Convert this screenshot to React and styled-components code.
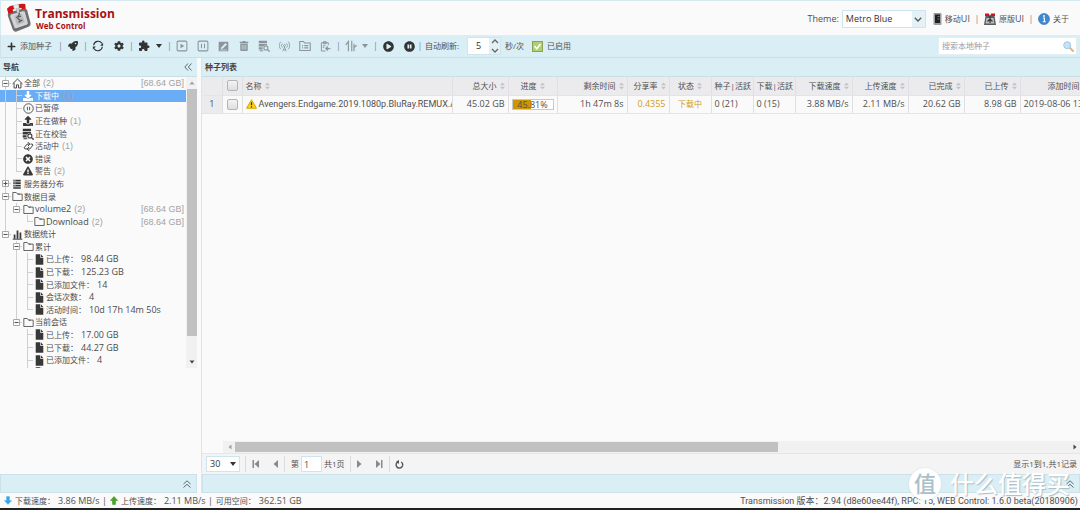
import React from 'react';
import styled, { createGlobalStyle, css } from 'styled-components';
import {
  FaPlus, FaRocket, FaCog, FaTrashAlt, FaDownload, FaUpload,
  FaTimesCircle, FaExclamationTriangle, FaPlayCircle, FaPauseCircle,
} from 'react-icons/fa';
import { MdExtension } from 'react-icons/md';

const GlobalStyle = createGlobalStyle`
  * { box-sizing: border-box; }
  body {
    margin: 0;
    background: #fafafa;
    color: #505050;
    font-family: "Open Sans", "Noto Sans CJK SC", sans-serif;
    font-size: 8px;
    line-height: 12px;
  }
  button, input, select { font: inherit; color: inherit; margin: 0; padding: 0; border: 0; background: none; border-radius: 0; outline: 0; }
  button { cursor: pointer; }
  a { color: inherit; text-decoration: none; }
`;

/* ---------- icons ---------- */

const Svg = ({ size = 11, w, children, ...rest }) => (
  <svg width={w || size} height={size} viewBox="0 0 16 16" fill="none" stroke="currentColor" strokeWidth="1.4" aria-hidden="true" {...rest}>
    {children}
  </svg>
);
const BoxPlay = () => <Svg size={12}><rect x="1.5" y="1.5" width="13" height="13" rx="1.5" /><path d="M6 5l5 3-5 3z" fill="currentColor" stroke="none" /></Svg>;
const BoxPause = () => <Svg size={12}><rect x="1.5" y="1.5" width="13" height="13" rx="1.5" /><path d="M6 5v6M10 5v6" /></Svg>;
const BoxEdit = () => <Svg><rect x="1" y="1" width="14" height="14" rx="1" fill="currentColor" stroke="none" /><path d="M4 12l1-3 6-6 2 2-6 6z" fill="#daeef5" stroke="none" /><path d="M3 13h10" stroke="#daeef5" strokeWidth="1" /></Svg>;
const DbSearch = () => (
  <Svg size={12}>
    <path d="M1 1h11v3H1zM1 5h11v2.3a4 4 0 0 0-5 1.2H1zM1 9.500h5.200a4 4 0 0 0 .3 3H1zM2 13.500h5v1.500H2z" fill="currentColor" stroke="none" />
    <circle cx="10.500" cy="10.500" r="2.700" /><path d="M12.500 12.500l3 3" strokeWidth="1.800" />
  </Svg>
);
const Tower = () => (
  <Svg strokeWidth="1.200">
    <circle cx="8" cy="6.500" r="1.400" /><path d="M8 8v2M8 9l-2.500 6M8 9l2.500 6M6.500 13h3M5 9.500a4 4 0 0 1 0-6M11 9.500a4 4 0 0 0 0-6M2.600 12a8 8 0 0 1 0-11M13.400 12a8 8 0 0 0 0-11" />
  </Svg>
);
const FolderList = () => <Svg size={12}><path d="M1 14V2h5l1.500 2H15v10z" /><path d="M4 7.500h1.500M4 10.500h1.500M7 7.500h5.500M7 10.500h5.500" /></Svg>;
const ClipArrow = () => <Svg><path d="M12 6V2.500H2v12h6M5 1h4v3H5z" /><path d="M4 7h4M4 9.500h2" /><path d="M15 11H9m2.500-3L8.500 11l3 3" strokeWidth="1.800" /></Svg>;
const SortArrows = () => <Svg size={12}><path d="M4.500 15V2L1 6.500M9 1v14M12 15V5M12 10l3.500-3" strokeWidth="1.500" /></Svg>;
const Reload = () => (
  <Svg size={12} strokeWidth="1.500">
    <path d="M2.200 7a6 6 0 0 1 11-2.500M13.800 9a6 6 0 0 1-11 2.500" />
    <path d="M14.800 3.500v4h-4zM1.200 12.500v-4h4z" fill="currentColor" stroke="none" />
  </Svg>
);
const Home = () => <Svg size={11} strokeWidth="1.300"><path d="M.8 8.500L8 1.500l7.200 7M3 7v7.500h3.500V10h3v4.500H13V7" /></Svg>;
const PauseRound = () => <Svg size={11} strokeWidth="1.200"><circle cx="8" cy="8" r="6.900" /><path d="M6.400 5.500v5M9.600 5.500v5" /></Svg>;
const Swap = () => <Svg size={11}><path d="M6 11.500H3L1.500 10 6 4.500h3M7 1.500l3 3-3 3M11 4.500h2.500L14.500 6 10 11.500H7M9 8.500l-3 3 3 3" /></Svg>;
const Servers = () => <Svg size={10}><path d="M2 1h12v3H2zM2 5h12v3H2zM2 9h12v3H2zM2 13h12v2.500H2z" fill="currentColor" stroke="none" /><path d="M3 2.500h3M3 6.500h3M3 10.500h3" stroke="#fafafa" strokeWidth=".8" /></Svg>;
const Folder = () => <Svg size={11} strokeWidth="1.100"><path d="M1.200 13.800V2.200h5l2 2.300h6.600v9.300z" /><path d="M8.200 4.500h3" /></Svg>;
const Bars = () => <Svg size={11}><path d="M1 14.800h14" /><path d="M2.500 8h2.500v6H2.500zM6.700 2h2.600v12H6.700zM11 5h2.500v9H11z" fill="currentColor" stroke="none" /></Svg>;
const FileIcon = () => <Svg size={11}><path d="M2.500.5H9V5.500h4.500v10h-11zM10 .5l3.500 4H10z" fill="currentColor" stroke="none" /></Svg>;
const Caret = () => <svg width="6" height="4" viewBox="0 0 6 4" aria-hidden="true"><path d="M0 0h6L3 4z" fill="currentColor" /></svg>;
const DoubleChevron = ({ turn = 0 }) => (
  <svg width="8" height="8" viewBox="0 0 8 8" aria-hidden="true"><path transform={`rotate(${turn} 4 4)`} d="M4 .5L.8 4 4 7.500M7.500 .5L4.300 4l3.200 3.500" fill="none" stroke="#5b6a70" strokeWidth="1" /></svg>
);
const SortMark = () => <svg width="5" height="8" viewBox="0 0 5 8" aria-hidden="true"><path d="M0 3.300L2.500.4 5 3.300zM0 4.700l2.500 2.900L5 4.700z" fill="#c3c3c6" /></svg>;
const WarnSvg = styled.svg`
  flex: none;
`;
const Warn = () => (
  <WarnSvg width="11" height="10" viewBox="0 0 22 20" aria-hidden="true">
    <path d="M11 1.500L21 18.500H1z" fill="#f6d21c" stroke="#d9a800" strokeWidth="2" strokeLinejoin="round" />
    <path d="M11 6.500v6M11 14.500v2.500" stroke="#3a3000" strokeWidth="2.400" />
  </WarnSvg>
);
const Logo = () => (
  <svg width="25" height="30" viewBox="0 0 26 30" aria-hidden="true">
    <path d="M2 13q-1-3 2-4l14-4q3-.5 4 2l3.500 13q.5 3-2 4L11 29q-3 .8-4-2z" fill="#6f7071" />
    <path d="M4 13.500q-.5-2 1.500-2.700L17.500 7.500q2-.4 2.600 1.200l3 11q.4 2-1.400 2.700L11 26q-2 .6-2.700-1.200z" fill="#d2d3d4" stroke="#4f5051" strokeWidth=".6" />
    <path d="M8.500 13l8-2.500 3 9-8 2.800z" fill="#b8babb" />
    <path d="M11.500 8.500q4 1 1.500 4t2 5M10.500 14.500l5-1.500M13 19.500l4-2.500" stroke="#555657" strokeWidth="1.300" fill="none" />
    <path d="M10.500 4.500l2.500-.5 1 5.500-2.500.6z" fill="#d9d9d9" stroke="#777" strokeWidth=".4" />
    <path d="M1 5.500q3-4 7-3.500l1 3.500-2 1 .5 2.500-5 1.500zM12.500 1q4-1.500 7.500-.5l.5 5-4 .5-.5-1.500-2.500.3z" fill="#d31217" />
    <path d="M7.500 2l5.500-1 .7 3.500-5 1.200z" fill="#eee" stroke="#999" strokeWidth=".4" />
  </svg>
);
const Phone = () => (
  <svg width="9" height="12" viewBox="0 0 8 12" aria-hidden="true"><rect width="8" height="12" rx="1" fill="#9a9c9d" /><rect x="1.500" y="1.500" width="5" height="8.500" fill="#1e2122" /><path d="M4 3.500h2M4 6h2" stroke="#889" strokeWidth=".8" /></svg>
);
const MiniLogo = () => (
  <svg width="12" height="12" viewBox="0 0 12 12" aria-hidden="true">
    <path d="M1.500 3h9L12 12H0z" fill="#5c5d5e" /><path d="M2.500 5h7l.8 5.500H1.700z" fill="#bfc0c1" /><path d="M6 2v8M3.500 8.500L6 6l2.500 2.500" stroke="#333" strokeWidth="1.200" fill="none" /><path d="M1 .5h4l.5 2.500H1zM7 .5h4V3H6.500z" fill="#d31217" />
  </svg>
);
const Info = () => (
  <svg width="12" height="12" viewBox="0 0 12 12" aria-hidden="true"><circle cx="6" cy="6" r="5.500" fill="#3d8ad2" stroke="#2a6cb0" strokeWidth=".6" /><path d="M5 5h1.400v3.500M4.800 8.800h3" stroke="#fff" strokeWidth="1.100" fill="none" /><circle cx="6" cy="3" r=".9" fill="#fff" /></svg>
);
const Lens = () => (
  <svg width="11" height="11" viewBox="0 0 11 11" aria-hidden="true"><path d="M6.500 6.500l3.500 3.500" stroke="#e9b27c" strokeWidth="2" strokeLinecap="round" /><circle cx="4.200" cy="4.200" r="3.500" fill="#c4e2f7" stroke="#a3c6e2" strokeWidth="1" /></svg>
);
const CheckBadge = () => (
  <svg width="11" height="11" viewBox="0 0 11 11" aria-hidden="true"><rect x=".5" y=".5" width="10" height="10" fill="#b0cf72" stroke="#8aa551" /><path d="M2.500 5l2.300 2.700L8.500 3" stroke="#fff" strokeWidth="1.600" fill="none" /></svg>
);
const FatArrow = ({ up }) => (
  <svg width="8" height="9" viewBox="0 0 8 9" aria-hidden="true">
    {up ? <path d="M4 .5l3.700 4H5.500v4h-3v-4H.3z" fill="#45a81d" stroke="#2f7d12" strokeWidth=".4" /> : <path d="M4 8.500l3.700-4H5.500v-4h-3v4H.3z" fill="#35a3e6" stroke="#5ab4ea" strokeWidth=".4" />}
  </svg>
);
const PageArrow = ({ left, bar }) => (
  <svg width="8" height="8" viewBox="0 0 8 8" aria-hidden="true"><g transform={left ? 'translate(8 0) scale(-1 1)' : undefined} fill="#8a8a8a"><path d="M1 0l4.500 4L1 8z" />{bar && <path d="M6 0h1.500v8H6z" />}</g></svg>
);
const ScrollTip = ({ turn, dark }) => (
  <svg width="6" height="6" viewBox="0 0 6 6" aria-hidden="true"><path transform={`rotate(${turn} 3 3)`} d="M.5 4.500h5L3 1.500z" fill={dark ? '#444' : '#a0a0a0'} /></svg>
);

/* ---------- page frame ---------- */

const Latin = styled.span`
  font-size: 9px;
`;
const LongText = styled.span`
  font-family: Roboto, "Noto Sans CJK SC", sans-serif;
  font-size: 9px;
  white-space: nowrap;
`;
const Page = styled.div`
  position: relative;
  display: flex;
  flex-direction: column;
  min-height: 100vh;
  border-top: 1px solid #d5e9f0;
  border-bottom: 2px solid #222;
  overflow: hidden;
`;
const Header = styled.header`
  display: flex;
  align-items: center;
  justify-content: space-between;
  height: 34px;
  padding: 0 11px 0 5px;
  border-left: 1px solid #d5e9f0;
`;
const Brand = styled.div`
  display: flex;
  align-items: center;
  gap: 4px;
  color: #a81014;
  font-weight: 700;
`;
const BrandText = styled.div`
  display: flex;
  flex-direction: column;
  padding-top: 2px;
`;
const BrandName = styled.h1`
  margin: 0;
  font-size: 12px;
  line-height: 13px;
`;
const BrandSub = styled.span`
  padding-left: 1px;
  line-height: 11px;
`;
const HeaderTools = styled.div`
  display: flex;
  align-items: center;
  gap: 3px;
  padding-top: 2px;
`;
const IconLink = styled.a`
  display: flex;
  align-items: center;
  gap: 3px;
`;
const LinkText = styled.span`
  display: flex;
`;
const Sep = styled.span`
  flex: none;
  width: ${(p) => p.$w || 13}px;
  text-align: center;
  font-size: 9px;
  color: #808a8e;
`;
const ThemePick = styled.label`
  display: flex;
  align-items: center;
  gap: 3px;
  margin-right: 4px;
  font-size: 9px;
`;
const SelectBox = styled.span`
  display: grid;
  grid-template-columns: 1fr 13px;
  width: ${(p) => p.$w}px;
  height: ${(p) => p.$h}px;
  border: 1px solid #cfe5ed;
  background: #fff;
  align-items: center;
  color: #333;
`;
const BareSelect = styled.select`
  grid-area: 1 / 1 / 2 / 3;
  appearance: none;
  width: 100%;
  height: 100%;
  padding-left: 3px;
  font-size: 9px;
`;
const SelectMark = styled.span`
  grid-area: 1 / 2;
  display: flex;
  align-items: center;
  justify-content: center;
  height: 100%;
  pointer-events: none;
  background: ${(p) => (p.$tint ? '#e4f2f7' : 'transparent')};
`;

const Toolbar = styled.div`
  display: flex;
  align-items: center;
  height: 23px;
  padding: 0 3px 0 6px;
  background: #daeef5;
  border-bottom: 1px solid #c9dfe6;
  border-left: 1px solid #cfe3ea;
`;
const ToolButton = styled.button`
  display: flex;
  align-items: center;
  justify-content: center;
  flex: none;
  gap: 4px;
  min-width: ${(p) => p.$w || 12}px;
  color: ${(p) => (p.disabled ? '#8b9599' : '#333')};
`;
const ToolLabel = styled.span`
  padding-right: 2px;
  color: #505050;
`;
const ToolGroup = styled.div`
  display: flex;
  flex: none;
  justify-content: space-between;
  width: ${(p) => p.$w}px;
`;
const RefreshField = styled.label`
  display: flex;
  align-items: center;
  gap: 4px;
`;
const Spinner = styled.span`
  display: flex;
  height: 18px;
  width: 34px;
  margin-left: 4px;
  border: 1px solid #cfe5ed;
  background: #fff;
`;
const SpinInput = styled.input`
  width: 21px;
  text-align: center;
  font-size: 9px;
  color: #333;
`;
const SpinArrows = styled.span`
  display: flex;
  flex: 1;
  align-items: center;
  justify-content: center;
  background: #e1f1f6;
`;
const SearchBox = styled.div`
  display: flex;
  align-items: center;
  width: 139px;
  height: 18px;
  margin-left: auto;
  padding: 0 2px 0 3px;
  background: #fff;
  border: 1px solid #e2eff4;
`;
const SearchInput = styled.input`
  flex: 1;
  min-width: 0;
  &::placeholder { color: #a0a0a0; opacity: 1; }
`;

const Body = styled.div`
  display: flex;
  flex: 1;
  gap: 4px;
`;
const panel = css`
  display: flex;
  flex-direction: column;
  border: 0 solid #d3e7ee;
`;
const Sidebar = styled.nav`
  ${panel}
  flex: none;
  width: 197px;
`;
const Main = styled.main`
  ${panel}
  flex: 1;
  min-width: 0;
  border-left-width: 1px;
`;
const PanelTitle = styled.div`
  display: flex;
  align-items: center;
  justify-content: space-between;
  height: 19px;
  padding: 0 5px 0 3px;
  background: #daeef5;
  border-bottom: 1px solid #c9dfe6;
  color: #444;
  h2 { margin: 0; font-size: 8px; font-weight: 700; }
`;
const PanelFoot = styled.div`
  display: flex;
  align-items: center;
  justify-content: flex-end;
  height: 19px;
  margin-top: ${(p) => (p.$push ? 'auto' : 0)};
  padding-right: 5px;
  background: #daeef5;
  border: 1px solid #cbe2ea;
`;

/* ---------- tree ---------- */

const TreeView = styled.div`
  display: flex;
  height: 291px;
`;
const TreeClip = styled.div`
  flex: 1;
  overflow: hidden;
`;
const TreeList = styled.ul`
  display: grid;
  grid-auto-rows: 1fr;
  height: 302px;
  margin: 0;
  padding: 0;
  list-style: none;
`;
const TreeRow = styled.li`
  display: flex;
  align-items: center;
  min-height: 0;
  padding-right: 2px;
  white-space: nowrap;
  background: ${(p) => (p.$on ? '#6aacf6' : 'transparent')};
  color: ${(p) => (p.$on ? '#fff' : '#4c4c4c')};
`;
const line = '#cfcfcf';
const Indent = styled.span`
  align-self: stretch;
  flex: none;
  display: flex;
  align-items: center;
  width: 11px;
  background-image: ${(p) => (/[vtlme]/.test(p.$k) ? `linear-gradient(${line}, ${line})` : 'none')}${(p) => (/[tlme]/.test(p.$k) ? `, linear-gradient(${line}, ${line})` : '')};
  background-size: 1px ${(p) => (/[le]/.test(p.$k) ? '50%' : '100%')}, 6px 1px;
  background-position: 5px 0, 5px 50%;
  background-repeat: no-repeat;
`;
const Toggle = styled.button`
  display: flex;
  margin-left: 2px;
`;
const TreeIcon = styled.span`
  display: flex;
  flex: none;
  justify-content: center;
  width: 12px;
  color: ${(p) => (p.$on ? '#fff' : '#383838')};
`;
const TreeLabel = styled.span`
  padding-left: 1px;
  font-size: ${(p) => (p.$latin ? 9 : 8)}px;
`;
const Count = styled.span`
  margin-left: 3px;
  color: #a3a3a3;
  font-family: "Liberation Sans", sans-serif;
  font-size: 9px;
`;
const Size = styled(Count)`
  margin-left: auto;
`;
const Value = styled(Latin)`
  margin-left: 3px;
`;
const ScrollV = styled.div`
  display: flex;
  flex-direction: column;
  align-items: center;
  justify-content: space-between;
  width: 11px;
  padding: 3px 0;
  background: #f1f1f1;
`;
const ThumbV = styled.div`
  flex: 1;
  width: 10px;
  margin: 3px 0 23px;
  background: #c1c1c1;
`;

/* one letter per indent cell: v line, t branch, l last branch, m open, e open and last, p closed */
const tree = [
  { cells: 'm', Icon: Home, label: '全部', count: '(2)', size: '[68.64 GB]' },
  { cells: 'vt', Icon: FaDownload, label: '下载中', count: '(1)', on: true },
  { cells: 'vt', Icon: PauseRound, label: '已暂停' },
  { cells: 'vt', Icon: FaUpload, label: '正在做种', count: '(1)' },
  { cells: 'vt', Icon: DbSearch, label: '正在校验' },
  { cells: 'vt', Icon: Swap, label: '活动中', count: '(1)' },
  { cells: 'vt', Icon: FaTimesCircle, label: '错误' },
  { cells: 'vl', Icon: FaExclamationTriangle, label: '警告', count: '(2)' },
  { cells: 'p', Icon: Servers, label: '服务器分布' },
  { cells: 'm', Icon: Folder, label: '数据目录' },
  { cells: 've', Icon: Folder, label: 'volume2', latin: true, count: '(2)', size: '[68.64 GB]' },
  { cells: 'v l', Icon: Folder, label: 'Download', latin: true, count: '(2)', size: '[68.64 GB]' },
  { cells: 'e', Icon: Bars, label: '数据统计' },
  { cells: ' m', Icon: Folder, label: '累计' },
  { cells: ' vt', Icon: FileIcon, label: '已上传：', value: '98.44 GB' },
  { cells: ' vt', Icon: FileIcon, label: '已下载：', value: '125.23 GB' },
  { cells: ' vt', Icon: FileIcon, label: '已添加文件：', value: '14' },
  { cells: ' vt', Icon: FileIcon, label: '会话次数：', value: '4' },
  { cells: ' vl', Icon: FileIcon, label: '活动时间：', value: '10d 17h 14m 50s' },
  { cells: ' e', Icon: Folder, label: '当前会话' },
  { cells: '  t', Icon: FileIcon, label: '已上传：', value: '17.00 GB' },
  { cells: '  t', Icon: FileIcon, label: '已下载：', value: '44.27 GB' },
  { cells: '  t', Icon: FileIcon, label: '已添加文件：', value: '4' },
  { cells: '  t', Icon: FileIcon, label: '' },
];

const TreeItem = ({ row }) => {
  const { cells, Icon, label, count, size, on, value, latin } = row;
  return (
    <TreeRow $on={on}>
      {cells.split('').map((k, i) => (
        <Indent key={i} $k={k === 'p' ? 'm' : k}>
          {/[mep]/.test(k) && (
            <Toggle aria-label={label}>
              <svg width="7" height="7" viewBox="0 0 7 7"><path d="M.5.5h6v6h-6z" fill="#fafafa" stroke="#a8a8a8" /><path d={k === 'p' ? 'M1.500 3.500h4M3.500 1.500v4' : 'M1.500 3.500h4'} stroke="#555" /></svg>
            </Toggle>
          )}
        </Indent>
      ))}
      <TreeIcon $on={on}><Icon size={10} /></TreeIcon>
      <TreeLabel $latin={latin}>{label}</TreeLabel>
      {value && <Value>{value}</Value>}
      {count && <Count>{count}</Count>}
      {size && <Size>{size}</Size>}
    </TreeRow>
  );
};

/* ---------- torrent table ---------- */

const TableWrap = styled.div`
  flex: 1;
  overflow: hidden;
`;
const Table = styled.table`
  table-layout: fixed;
  width: 889px;
  border-collapse: collapse;
`;
const cell = css`
  height: 18px;
  padding: 0 3px;
  border-right: 1px solid #e0e0e2;
  border-bottom: 1px solid #e4e4e6;
  text-align: ${(p) => p.$a || 'left'};
  white-space: nowrap;
  overflow: hidden;
  font-weight: 400;
`;
const Th = styled.th`
  ${cell}
  background: #ebebed;
  & > span { display: inline-flex; align-items: center; gap: 3px; }
`;
const Td = styled.td`
  ${cell}
  font-size: ${(p) => (p.$cjk ? 8 : 9)}px;
  background: ${(p) => (p.$rownum ? '#ebebed' : 'transparent')};
  color: ${(p) => (p.$gold ? '#d19a1c' : 'inherit')};
`;
const Check = styled.input`
  appearance: none;
  display: block;
  width: 11px;
  height: 11px;
  margin: 0 auto;
  border: 1px solid #b4b4b4;
  border-radius: 2px;
  background: linear-gradient(#f4f4f4, #dedede);
`;
const NameCell = styled.span`
  display: flex;
  align-items: center;
  gap: 2px;
`;
const Progress = styled.div`
  display: grid;
  height: 11px;
  border: 1px solid #c8c8c8;
  background: #fff;
  line-height: 9px;
  text-align: center;
`;
const ProgressFill = styled.div`
  grid-area: 1 / 1;
  background: #cb9600;
`;
const ProgressText = styled.span`
  grid-area: 1 / 1;
`;

const columns = [
  { w: 210, t: '名称', a: 'left' },
  { w: 56, t: '总大小', a: 'right' },
  { w: 49, t: '进度', a: 'center' },
  { w: 70, t: '剩余时间', a: 'right' },
  { w: 42, t: '分享率', a: 'right' },
  { w: 42, t: '状态', a: 'center' },
  { w: 42, t: '种子|活跃', a: 'left', plain: true },
  { w: 42, t: '下载|活跃', a: 'left', plain: true },
  { w: 57, t: '下载速度', a: 'right' },
  { w: 56, t: '上传速度', a: 'right' },
  { w: 56, t: '已完成', a: 'right' },
  { w: 56, t: '已上传', a: 'right' },
  { w: 71, t: '添加时间', a: 'right' },
];

const ScrollH = styled.div`
  display: flex;
  align-items: center;
  height: 12px;
  margin-left: 21px;
  padding: 0 2px 0 4px;
  background: #f1f1f1;
`;
const TrackH = styled.div`
  flex: 1;
  margin: 0 2px;
`;
const ThumbH = styled.div`
  width: 65%;
  height: 10px;
  background: #c1c1c1;
`;
const Pager = styled.div`
  display: flex;
  align-items: center;
  height: 21px;
  padding: 0 3px 0 4px;
  background: #f4f4f4;
  border-top: 1px solid #e6e6e6;
`;
const PagerSep = styled.span`
  width: 1px;
  height: 16px;
  margin-left: ${(p) => p.$gap || 0}px;
  background: #dcdcdc;
`;
const PagerButton = styled.button`
  display: flex;
  align-items: center;
  justify-content: center;
  width: 19px;
  height: 14px;
`;
const PageField = styled.label`
  display: flex;
  align-items: center;
  gap: 2px;
  margin-left: 6px;
`;
const PageInput = styled.input`
  width: 21px;
  height: 16px;
  padding-left: 2px;
  border: 1px solid #cfe5ed;
  background: #fff;
  font-size: 9px;
`;
const PageInfo = styled.span`
  margin-left: auto;
`;

const Status = styled.footer`
  display: flex;
  align-items: center;
  justify-content: space-between;
  height: 15px;
  padding: 0 2px 0 4px;
  white-space: nowrap;
`;
const StatusPart = styled.div`
  display: flex;
  align-items: center;
  gap: 3px;
`;

/* translucent site mark lying over the lower right corner */
const Mark = styled.div`
  position: absolute;
  right: 10px;
  bottom: 8px;
  display: flex;
  align-items: center;
  gap: 9px;
  color: #fff;
  font-size: 24px;
  font-weight: 500;
  line-height: 32px;
  text-shadow: 1px 1px 1px #a9bcc4;
  pointer-events: none;
`;
const MarkDisc = styled.span`
  width: 32px;
  height: 32px;
  border-radius: 50%;
  background: #fff;
  box-shadow: 0 0 2px #cfdade;
  color: #a9c0ca;
  text-align: center;
  font-size: 22px;
  line-height: 31px;
  text-shadow: none;
`;

export default function App() {
  return (
    <Page>
      <GlobalStyle />
      <Header>
        <Brand>
          <Logo />
          <BrandText>
            <BrandName>Transmission</BrandName>
            <BrandSub>Web Control</BrandSub>
          </BrandText>
        </Brand>
        <HeaderTools>
          <ThemePick>
            Theme:
            <SelectBox $w={84} $h={18}>
              <SelectMark $tint><svg width="8" height="5" viewBox="0 0 8 5"><path d="M.8.8L4 4 7.200.8" fill="none" stroke="#555" strokeWidth="1.300" /></svg></SelectMark>
              <BareSelect defaultValue="Metro Blue"><option>Metro Blue</option></BareSelect>
            </SelectBox>
          </ThemePick>
          <IconLink href="#mobile"><Phone /><LinkText>移动<Latin>UI</Latin></LinkText></IconLink>
          <Sep $w={8}>|</Sep>
          <IconLink href="#original"><MiniLogo /><LinkText>原版<Latin>UI</Latin></LinkText></IconLink>
          <Sep $w={8}>|</Sep>
          <IconLink href="#about"><Info />关于</IconLink>
        </HeaderTools>
      </Header>

      <Toolbar>
        <ToolButton><FaPlus size={9} /><ToolLabel>添加种子</ToolLabel></ToolButton>
        <Sep>|</Sep>
        <ToolButton aria-label="rocket"><FaRocket size={10} /></ToolButton>
        <Sep>|</Sep>
        <ToolGroup $w={33}>
          <ToolButton aria-label="reload"><Reload /></ToolButton>
          <ToolButton aria-label="settings"><FaCog size={10} /></ToolButton>
        </ToolGroup>
        <Sep>|</Sep>
        <ToolGroup $w={25}>
          <ToolButton aria-label="plugins"><MdExtension size={12} /></ToolButton>
          <ToolButton $w={8} aria-label="plugin menu"><Caret /></ToolButton>
        </ToolGroup>
        <Sep>|</Sep>
        <ToolGroup $w={156}>
          {[BoxPlay, BoxPause, BoxEdit, FaTrashAlt, DbSearch, Tower, FolderList, ClipArrow].map((I, i) => (
            <ToolButton key={i} disabled aria-label={`action ${i + 1}`}><I size={10} /></ToolButton>
          ))}
        </ToolGroup>
        <Sep>|</Sep>
        <ToolGroup $w={24}>
          <ToolButton disabled aria-label="queue"><SortArrows /></ToolButton>
          <ToolButton disabled $w={8} aria-label="queue menu"><Caret /></ToolButton>
        </ToolGroup>
        <Sep>|</Sep>
        <ToolGroup $w={33}>
          <ToolButton aria-label="start all"><FaPlayCircle size={11} /></ToolButton>
          <ToolButton aria-label="pause all"><FaPauseCircle size={11} /></ToolButton>
        </ToolGroup>
        <Sep $w={10}>|</Sep>
        <RefreshField>
          自动刷新:
          <Spinner>
            <SpinInput defaultValue="5" />
            <SpinArrows>
              <svg width="8" height="14" viewBox="0 0 8 14"><path d="M1 4l3-3 3 3M1 10l3 3 3-3" fill="none" stroke="#666" strokeWidth="1.300" /></svg>
            </SpinArrows>
          </Spinner>
          秒/次
        </RefreshField>
        <Sep $w={8} />
        <ToolButton><CheckBadge /><ToolLabel>已启用</ToolLabel></ToolButton>
        <SearchBox>
          <SearchInput placeholder="搜索本地种子" aria-label="搜索本地种子" />
          <Lens />
        </SearchBox>
      </Toolbar>

      <Body>
        <Sidebar>
          <PanelTitle><h2>导航</h2><DoubleChevron /></PanelTitle>
          <TreeView>
            <TreeClip>
              <TreeList>{tree.map((row, i) => <TreeItem key={i} row={row} />)}</TreeList>
            </TreeClip>
            <ScrollV><ScrollTip turn={0} /><ThumbV /><ScrollTip turn={180} dark /></ScrollV>
          </TreeView>
          <PanelFoot $push><DoubleChevron turn={90} /></PanelFoot>
        </Sidebar>

        <Main>
          <PanelTitle><h2>种子列表</h2></PanelTitle>
          <TableWrap>
            <Table>
              <colgroup>
                <col style={{ width: 20 }} /><col style={{ width: 20 }} />
                {columns.map((c) => <col key={c.t} style={{ width: c.w }} />)}
              </colgroup>
              <thead>
                <tr>
                  <Th />
                  <Th><Check type="checkbox" aria-label="select all" /></Th>
                  {columns.map((c) => <Th key={c.t} $a={c.a}><span>{c.t}{!c.plain && <SortMark />}</span></Th>)}
                </tr>
              </thead>
              <tbody>
                <tr>
                  <Td $rownum $a="center">1</Td>
                  <Td><Check type="checkbox" aria-label="select row" /></Td>
                  <Td><NameCell><Warn /><LongText>Avengers.Endgame.2019.1080p.BluRay.REMUX.A</LongText></NameCell></Td>
                  <Td $a="right">45.02 GB</Td>
                  <Td>
                    <Progress>
                      <ProgressFill style={{ width: '45.81%' }} />
                      <ProgressText>45.81%</ProgressText>
                    </Progress>
                  </Td>
                  <Td $a="right">1h 47m 8s</Td>
                  <Td $a="right" $gold>0.4355</Td>
                  <Td $a="center" $gold $cjk>下载中</Td>
                  <Td>0 (21)</Td>
                  <Td>0 (15)</Td>
                  <Td $a="right">3.88 MB/s</Td>
                  <Td $a="right">2.11 MB/s</Td>
                  <Td $a="right">20.62 GB</Td>
                  <Td $a="right">8.98 GB</Td>
                  <Td>2019-08-06 13</Td>
                </tr>
              </tbody>
            </Table>
          </TableWrap>
          <ScrollH><ScrollTip turn={270} /><TrackH><ThumbH /></TrackH><ScrollTip turn={90} dark /></ScrollH>
          <Pager>
            <SelectBox $w={34} $h={16}>
              <SelectMark><Caret /></SelectMark>
              <BareSelect defaultValue="30" aria-label="page size"><option>30</option></BareSelect>
            </SelectBox>
            <PagerSep $gap={5} />
            <PagerButton aria-label="first"><PageArrow left bar /></PagerButton>
            <PagerButton aria-label="previous"><PageArrow left /></PagerButton>
            <PagerSep />
            <PageField>第<PageInput defaultValue="1" />共1页</PageField>
            <PagerSep $gap={5} />
            <PagerButton aria-label="next"><PageArrow /></PagerButton>
            <PagerButton aria-label="last"><PageArrow bar /></PagerButton>
            <PagerSep />
            <PagerButton aria-label="refresh">
              <svg width="9" height="9" viewBox="0 0 9 9"><path d="M3 1.800a3.300 3.300 0 1 0 3.200.2" fill="none" stroke="#555" strokeWidth="1.400" /><path d="M4 0v4L1.200 1.500z" fill="#555" /></svg>
            </PagerButton>
            <PageInfo>显示1到1,共1记录</PageInfo>
          </Pager>
          <PanelFoot><DoubleChevron turn={90} /></PanelFoot>
        </Main>
      </Body>

      <Status>
        <StatusPart>
          <FatArrow />下载速度：<Latin>3.86 MB/s |</Latin>
          <FatArrow up />上传速度：<Latin>2.11 MB/s |</Latin>可用空间：<Latin>362.51 GB</Latin>
        </StatusPart>
        <LongText>Transmission 版本：2.94 (d8e60ee44f), RPC: 15, WEB Control: 1.6.0 beta(20180906)</LongText>
      </Status>
      <Mark><MarkDisc>值</MarkDisc>什么值得买</Mark>
    </Page>
  );
}
